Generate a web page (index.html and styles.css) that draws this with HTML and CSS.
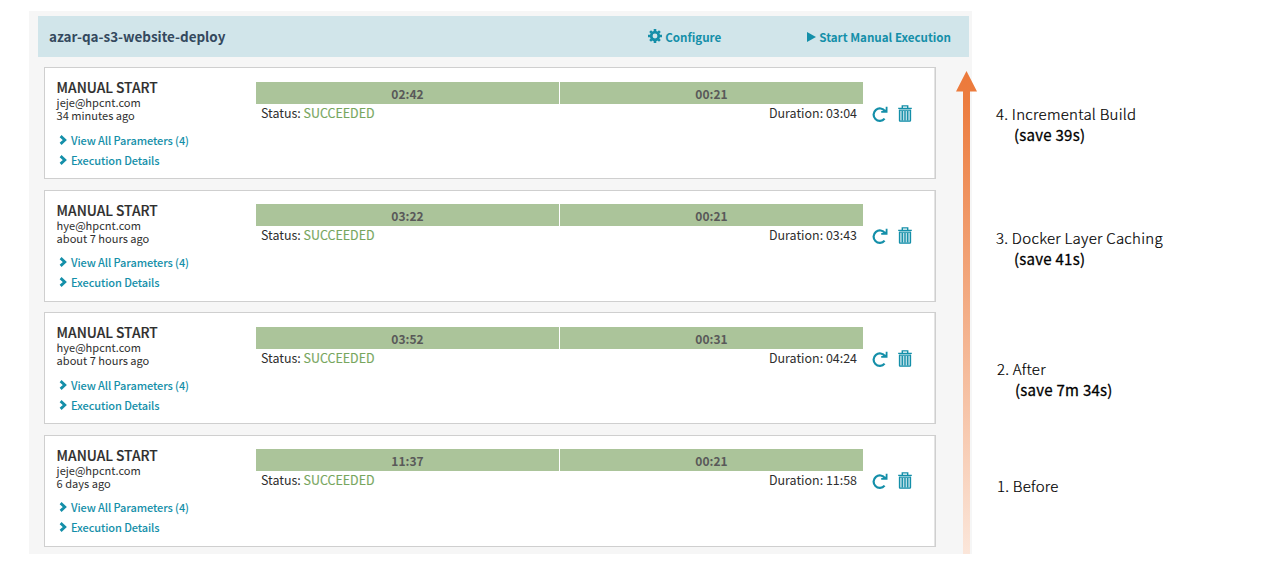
FILE: index.html
```html
<!DOCTYPE html>
<html lang="en">
<head>
<meta charset="utf-8">
<title>azar-qa-s3-website-deploy</title>
<link rel="stylesheet" href="styles.css">
</head>
<body>
<svg class="defs" width="0" height="0">
  <symbol id="chevron" viewBox="0 0 8 10"><path d="M1.600 1.100 5.800 5 1.600 8.900" fill="none" stroke="currentColor" stroke-width="2.800"/></symbol>
  <symbol id="redo" viewBox="0 0 16 16"><path d="M13 5.200A6.200 6.200 0 1 0 12.600 12.600" fill="none" stroke="currentColor" stroke-width="2.200"/><path d="M15.500.8V6.800H9.200V5L12.500 4.800 13.700 3.200V.8z" fill="currentColor"/></symbol>
  <symbol id="trash" viewBox="0 0 14 17"><path d="M4.300 2.800V.9h5.400v1.900M.2 3.400h13.600" fill="none" stroke="currentColor" stroke-width="1.400"/><path d="M1.500 5.200h11v10.200q0 .8-.8.8H2.300Q1.500 16.200 1.500 15.400z" fill="currentColor" fill-opacity=".3" stroke="currentColor" stroke-width="1.300"/><path d="M4.300 6v9.500M7 6v9.500M9.700 6v9.500" stroke="currentColor" stroke-width="1.300" fill="none"/></symbol>
</svg>
<main class="page">
  <section class="pipeline">
    <header class="bar">
      <h1 class="name">azar-qa-s3-website-deploy</h1>
      <a class="action configure"><svg class="gear" viewBox="-7 -7 14 14"><circle r="3.800" fill="none" stroke="currentColor" stroke-width="2.700"/><path d="M0-7V-4.500M0 7V4.500M-7 0H-4.500M7 0H4.500M-4.900-4.900-3.300-3.300M4.900 4.900 3.300 3.300M-4.900 4.900-3.300 3.300M4.900-4.900 3.300-3.300" stroke="currentColor" stroke-width="2.600"/></svg>Configure</a>
      <a class="action start"><svg class="play" viewBox="0 0 9 10"><path d="M0 0 9 5 0 10z" fill="currentColor"/></svg>Start Manual Execution</a>
    </header>
    <div class="runs">
      <article class="run">
        <div class="trigger"><h2>MANUAL START</h2><p>jeje@hpcnt.com</p><p>34 minutes ago</p>
          <a class="link"><svg><use href="#chevron"/></svg>View All Parameters (4)</a><a class="link"><svg><use href="#chevron"/></svg>Execution Details</a></div>
        <div class="result"><div class="stages"><span>02:42</span><span>00:21</span></div>
          <div class="summary"><span>Status: <b>SUCCEEDED</b></span><span>Duration: 03:04</span></div></div>
        <div class="tools"><svg class="redo"><use href="#redo"/></svg><svg class="trash"><use href="#trash"/></svg></div>
      </article>
      <article class="run">
        <div class="trigger"><h2>MANUAL START</h2><p>hye@hpcnt.com</p><p>about 7 hours ago</p>
          <a class="link"><svg><use href="#chevron"/></svg>View All Parameters (4)</a><a class="link"><svg><use href="#chevron"/></svg>Execution Details</a></div>
        <div class="result"><div class="stages"><span>03:22</span><span>00:21</span></div>
          <div class="summary"><span>Status: <b>SUCCEEDED</b></span><span>Duration: 03:43</span></div></div>
        <div class="tools"><svg class="redo"><use href="#redo"/></svg><svg class="trash"><use href="#trash"/></svg></div>
      </article>
      <article class="run">
        <div class="trigger"><h2>MANUAL START</h2><p>hye@hpcnt.com</p><p>about 7 hours ago</p>
          <a class="link"><svg><use href="#chevron"/></svg>View All Parameters (4)</a><a class="link"><svg><use href="#chevron"/></svg>Execution Details</a></div>
        <div class="result"><div class="stages"><span>03:52</span><span>00:31</span></div>
          <div class="summary"><span>Status: <b>SUCCEEDED</b></span><span>Duration: 04:24</span></div></div>
        <div class="tools"><svg class="redo"><use href="#redo"/></svg><svg class="trash"><use href="#trash"/></svg></div>
      </article>
      <article class="run">
        <div class="trigger"><h2>MANUAL START</h2><p>jeje@hpcnt.com</p><p>6 days ago</p>
          <a class="link"><svg><use href="#chevron"/></svg>View All Parameters (4)</a><a class="link"><svg><use href="#chevron"/></svg>Execution Details</a></div>
        <div class="result"><div class="stages"><span>11:37</span><span>00:21</span></div>
          <div class="summary"><span>Status: <b>SUCCEEDED</b></span><span>Duration: 11:58</span></div></div>
        <div class="tools"><svg class="redo"><use href="#redo"/></svg><svg class="trash"><use href="#trash"/></svg></div>
      </article>
    </div>
    <svg class="arrow" viewBox="0 0 21 483">
      <defs><linearGradient id="fade" x1="0" y1="0" x2="0" y2="483" gradientUnits="userSpaceOnUse"><stop offset="0" stop-color="#ec7a3b"/><stop offset=".06" stop-color="#ec7c3e"/><stop offset="1" stop-color="#fbe6da"/></linearGradient></defs>
      <path d="M10.500 0 21 20.500H14V483H7V20.500H0z" fill="url(#fade)"/>
    </svg>
  </section>
  <aside class="notes">
    <div class="note"><p>4. Incremental Build</p><p class="saved">(save 39s)</p></div>
    <div class="note"><p>3. Docker Layer Caching</p><p class="saved">(save 41s)</p></div>
    <div class="note after"><p>2. After</p><p class="saved">(save 7m 34s)</p></div>
    <div class="note before"><p>1. Before</p></div>
  </aside>
</main>
</body>
</html>
```
FILE: styles.css
```css
* { box-sizing: border-box; margin: 0; padding: 0; }
body { background: #fff; font-family: "Noto Sans CJK KR", "Noto Sans", sans-serif; color: #2e2e2e; white-space: nowrap; overflow: hidden; }
.defs { position: absolute; }
.page { display: flex; height: 564px; padding: 11px 0 0 29px; }
.pipeline { position: relative; width: 943px; height: 543px; padding: 5px 3px 0 9px; background: #f6f6f6; }
.bar { display: flex; align-items: center; height: 41px; padding: 0 18px 0 11px; background: #d1e5ea; }
.name { flex: 1; font-size: 13.45px; font-weight: 700; line-height: 20px; margin-top: -1px; color: #34495e; }
.action { display: flex; align-items: center; font-size: 11.6px; font-weight: 700; line-height: 20px; color: #148fa9; }
.configure { margin-right: 86px; }
.gear { width: 14px; height: 14px; margin: -2px 3px 0 0; }
.play { width: 9px; height: 10px; margin-right: 3px; }
.runs { display: flex; flex-direction: column; gap: 10.5px; padding: 10.4px 0 0 6px; }
.run { display: flex; width: 892px; height: 112px; padding: 13.3px 0 0 11.6px; border: 1px solid #cfcfcf; box-shadow: inset -1px 0 #e4e4e4; background: #fff; }
.trigger { width: 199.4px; margin-top: -1.7px; }
.trigger h2 { font-size: 13.8px; font-weight: 500; line-height: 15px; margin-bottom: 1px; -webkit-text-stroke: .15px #2e2e2e; }
.trigger p { font-size: 11.05px; line-height: 13px; }
.link { display: flex; align-items: center; height: 20px; font-size: 11px; font-weight: 500; letter-spacing: -.09px; line-height: 20px; color: #148fa9; }
p + .link { margin-top: 7.7px; }
.link svg { width: 8px; height: 10px; margin: 0 4.4px 0 2px; }
.result { width: 607px; }
.stages { display: flex; gap: 1px; height: 22px; }
.stages span { flex: 1; background: #abc49a; color: #595959; font-size: 12px; font-weight: 700; line-height: 23px; text-align: center; }
.summary { display: flex; justify-content: space-between; padding: 0 6px 0 5px; font-size: 12.45px; line-height: 19.8px; }
.summary b { color: #77a65e; font-weight: 400; -webkit-text-stroke: .15px #77a65e; }
.tools { display: flex; gap: 10px; padding: 23px 0 0 9px; color: #148fa9; }
.redo { width: 16px; height: 16px; margin-top: 1px; }
.trash { width: 14px; height: 17px; }
.arrow { position: absolute; left: 927px; top: 60px; width: 21px; height: 483px; }
.notes { height: 543px; padding: 92px 0 0 24px; color: #000; font-size: 15px; font-weight: 300; letter-spacing: .26px; line-height: 21px; -webkit-text-stroke: .2px #000; }
.note { height: 124px; }
.after { padding: 7px 0 0 1px; }
.before { height: 42px; padding-left: 1px; }
.saved { padding-left: 18px; font-weight: 400; -webkit-text-stroke: .3px #000; }
```
